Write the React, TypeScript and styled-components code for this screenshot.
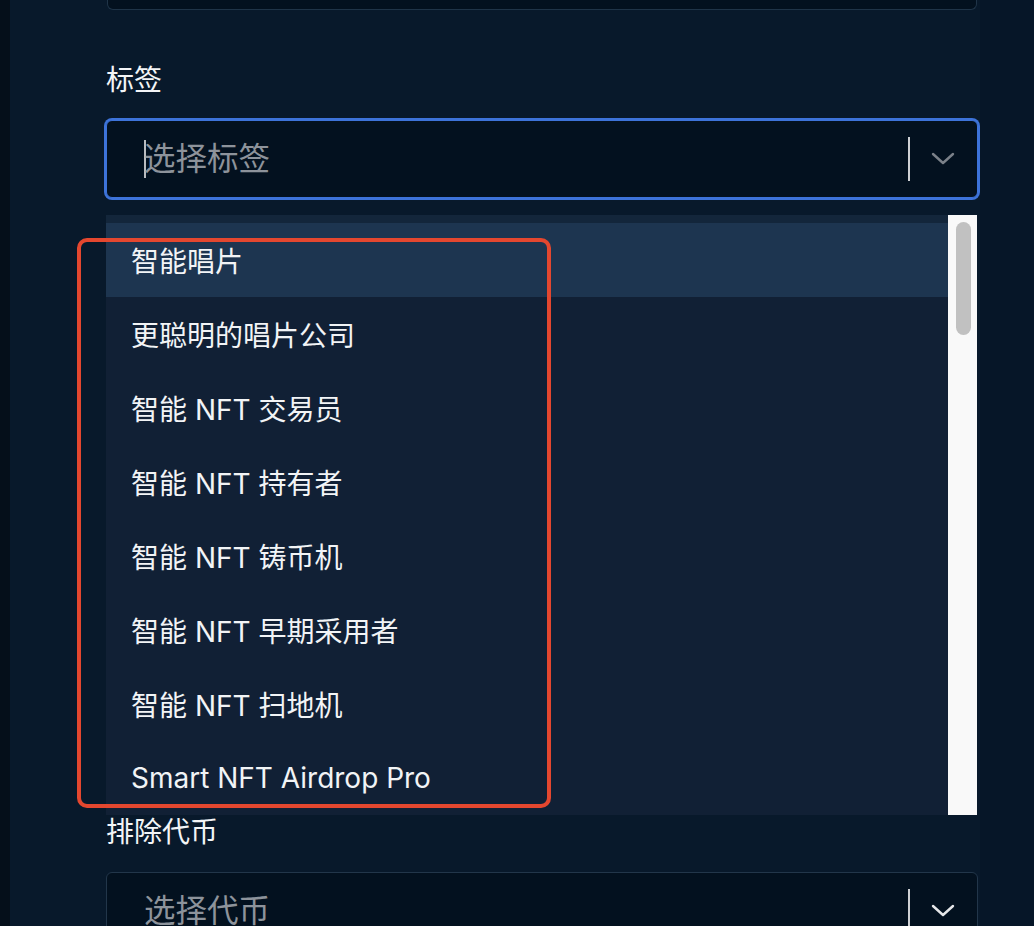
import React from "react";
import styled, { createGlobalStyle } from "styled-components";

const GlobalStyle = createGlobalStyle`
  html, body {
    margin: 0;
    padding: 0;
    background: #061628;
  }
  body {
    font-family: Inter, "Noto Sans CJK SC", "Noto Sans", sans-serif;
    -webkit-font-smoothing: antialiased;
  }
  * { box-sizing: border-box; }
`;

const Page = styled.div`
  position: relative;
  display: flex;
  height: 926px;
  overflow: hidden;
  background: #061628;
`;

const LeftStrip = styled.div`
  width: 10px;
  flex: none;
  background: #050f1a;
`;

const Panel = styled.div`
  width: 970px;
  flex: none;
  background: #08192b;
  padding: 0 2px 0 96px;
  display: flex;
  flex-direction: column;
  & > * { flex: none; }
`;

const CutInput = styled.div`
  height: 10px;
  margin: 0 1px;
  background: #03111f;
  border: 1px solid #1f3448;
  border-top: none;
  border-radius: 0 0 6px 6px;
`;

const Label = styled.div<{ $top: number; $lh: number }>`
  margin-top: ${(p) => p.$top}px;
  font-size: 28px;
  line-height: ${(p) => p.$lh}px;
  color: #f3f5f7;
`;

const SelectBox = styled.div<{ $focused?: boolean; $top: number }>`
  margin-top: ${(p) => p.$top}px;
  height: 78px;
  display: flex;
  align-items: center;
  background: #03111f;
  border: 1px solid ${(p) => (p.$focused ? "#3d73d9" : "#22364a")};
  border-radius: 6px;
  box-shadow: ${(p) => (p.$focused ? "0 0 0 2px #3d73d9" : "none")};
  padding-left: 37px;
`;

const Value = styled.div`
  flex: 1;
  display: flex;
  align-items: center;
  font-size: 31.5px;
  line-height: 40px;
  color: #8d939b;
`;

const Caret = styled.span`
  width: 2px;
  height: 38px;
  margin-right: -2px;
  background: #b9bcc0;
`;

const Separator = styled.span`
  width: 2px;
  height: 44px;
  background: #cfd1d4;
  flex: none;
`;

const Chevron = styled.svg`
  margin: 0 22px 0 21px;
  flex: none;
`;

const Menu = styled.div`
  margin-top: 17px;
  margin-right: 1px;
  height: 600px;
  display: flex;
  background: #13263b;
  overflow: hidden;
`;

const List = styled.div`
  flex: 1;
  padding-top: 8px;
  display: flex;
  flex-direction: column;
`;

const Item = styled.div<{ $active?: boolean }>`
  height: 74px;
  flex: none;
  display: flex;
  align-items: center;
  padding-left: 25px;
  font-size: 28px;
  color: #f2f4f6;
  background: ${(p) => (p.$active ? "#1d3550" : "#112035")};
`;

const Track = styled.div`
  width: 29px;
  flex: none;
  background: #f9f9f9;
  padding: 7px 0 0 8px;
`;

const Thumb = styled.div`
  width: 15px;
  height: 113px;
  border-radius: 8px;
  background: #c1c1c1;
`;

const Annotation = styled.div`
  position: absolute;
  left: 77px;
  top: 238px;
  width: 474px;
  height: 570px;
  border: 4px solid #e4472f;
  border-radius: 10px;
  pointer-events: none;
`;

const ChevronIcon: React.FC<{ color: string }> = ({ color }) => (
  <Chevron width="24" height="14" viewBox="0 0 24 14">
    <path d="M2 2 L12 11 L22 2" fill="none" stroke={color} strokeWidth="2.4" strokeLinecap="round" strokeLinejoin="round" />
  </Chevron>
);

const items = [
  "智能唱片",
  "更聪明的唱片公司",
  "智能 NFT 交易员",
  "智能 NFT 持有者",
  "智能 NFT 铸币机",
  "智能 NFT 早期采用者",
  "智能 NFT 扫地机",
  "Smart NFT Airdrop Pro",
];

export default function App() {
  return (
    <>
      <GlobalStyle />
      <Page>
        <LeftStrip />
        <Panel>
          <CutInput />
          <Label $top={52} $lh={36}>标签</Label>
          <SelectBox $focused $top={22}>
            <Value>
              <Caret />
              选择标签
            </Value>
            <Separator />
            <ChevronIcon color="#7b8189" />
          </SelectBox>
          <Menu>
            <List>
              {items.map((t, i) => (
                <Item key={t} $active={i === 0}>
                  {t}
                </Item>
              ))}
            </List>
            <Track>
              <Thumb />
            </Track>
          </Menu>
          <Label $top={0} $lh={34}>排除代币</Label>
          <SelectBox $top={23}>
            <Value>选择代币</Value>
            <Separator />
            <ChevronIcon color="#e6e7e9" />
          </SelectBox>
        </Panel>
        <Annotation />
      </Page>
    </>
  );
}
